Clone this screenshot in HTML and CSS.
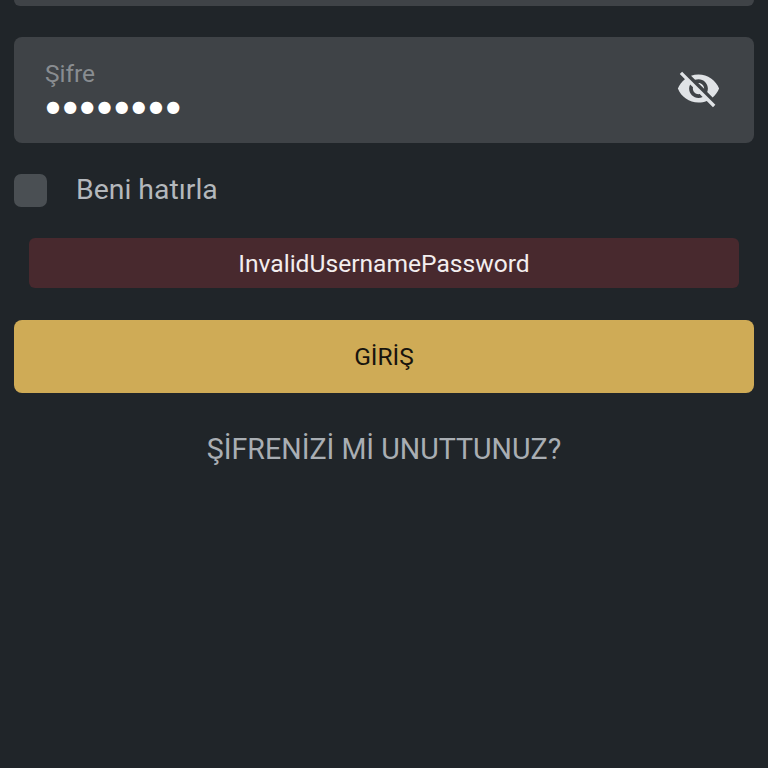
FILE: index.html
```html
<!DOCTYPE html>
<html lang="tr">
<head>
<meta charset="utf-8">
<title>Giriş</title>
<link rel="stylesheet" href="styles.css">
</head>
<body>
<main class="form">
  <div class="field-stub"></div>
  <div class="field">
    <div class="field-text">
      <div class="field-label">Şifre</div>
      <div class="field-value">●●●●●●●●</div>
    </div>
    <svg class="eye" viewBox="0 0 24 24" aria-hidden="true"><path d="M12 7c2.76 0 5 2.24 5 5 0 .65-.13 1.26-.36 1.83l2.92 2.92c1.51-1.26 2.7-2.89 3.43-4.75-1.73-4.39-6-7.5-11-7.5-1.4 0-2.74.25-3.98.7l2.16 2.16C10.74 7.13 11.35 7 12 7zM2 4.27l2.28 2.28.46.46C3.08 8.3 1.78 10.02 1 12c1.73 4.39 6 7.5 11 7.5 1.55 0 3.03-.3 4.38-.84l.42.42L19.73 22 21 20.73 3.27 3 2 4.27zM7.53 9.8l1.55 1.55c-.05.21-.08.43-.08.65 0 1.66 1.34 3 3 3 .22 0 .44-.03.65-.08l1.55 1.55c-.67.33-1.41.53-2.2.53-2.76 0-5-2.24-5-5 0-.79.2-1.53.53-2.2zm4.31-.78l3.15 3.15.02-.16c0-1.66-1.34-3-3-3l-.17.01z"/></svg>
  </div>
  <div class="remember">
    <span class="checkbox"></span>
    <span class="remember-label">Beni hatırla</span>
  </div>
  <div class="error">InvalidUsernamePassword</div>
  <div class="submit">GİRİŞ</div>
  <div class="forgot">ŞİFRENİZİ Mİ UNUTTUNUZ?</div>
</main>
</body>
</html>
```
FILE: styles.css
```css
* { box-sizing: border-box; }
html, body { margin: 0; height: 100%; }
body {
  background: #202529;
  font-family: Roboto, "Noto Sans", sans-serif;
  overflow: hidden;
}
.form {
  display: flex;
  flex-direction: column;
  padding: 0 14px 0 14px;
}
.field-stub {
  height: 6px;
  background: #3f4347;
  border-radius: 0 0 8px 8px;
}
.field {
  margin-top: 31px;
  height: 106px;
  background: #3f4347;
  border-radius: 8px;
  display: flex;
  align-items: center;
  justify-content: space-between;
  padding: 0 33px 0 31px;
}
.field-text { display: flex; flex-direction: column; padding-top: 2px; }
.field-label {
  font-size: 24.5px;
  line-height: 28px;
  color: #898d91;
}
.field-value {
  font-family: "DejaVu Sans", sans-serif;
  font-size: 16px;
  line-height: 28px;
  height: 29px;
  margin-top: 5px;
  margin-left: 1px;
  color: #fff;
  letter-spacing: 3.2px;
}
.eye { width: 45px; height: 45px; fill: #e0e3e6; margin-bottom: 3px; }
.remember {
  margin-top: 31px;
  display: flex;
  align-items: center;
  gap: 29px;
  height: 33px;
}
.checkbox {
  width: 33px;
  height: 33px;
  background: #4a4f53;
  border-radius: 7px;
}
.remember-label {
  font-size: 28.4px;
  line-height: 30px;
  margin-bottom: 2px;
  color: #b4b8bc;
}
.error {
  margin: 31px 15px 0 15px;
  height: 50px;
  background: #48292e;
  border-radius: 6px;
  display: flex;
  align-items: center;
  justify-content: center;
  padding-top: 1px;
  color: #f3eeee;
  font-size: 24.6px;
}
.submit {
  margin-top: 32px;
  height: 73px;
  background: #cfab56;
  border-radius: 8px;
  display: flex;
  align-items: center;
  justify-content: center;
  color: #17140e;
  font-size: 24.5px;
}
.forgot {
  margin-top: 38px;
  text-align: center;
  color: #a9aeb3;
  font-size: 28.6px;
  line-height: 36px;
}
```
